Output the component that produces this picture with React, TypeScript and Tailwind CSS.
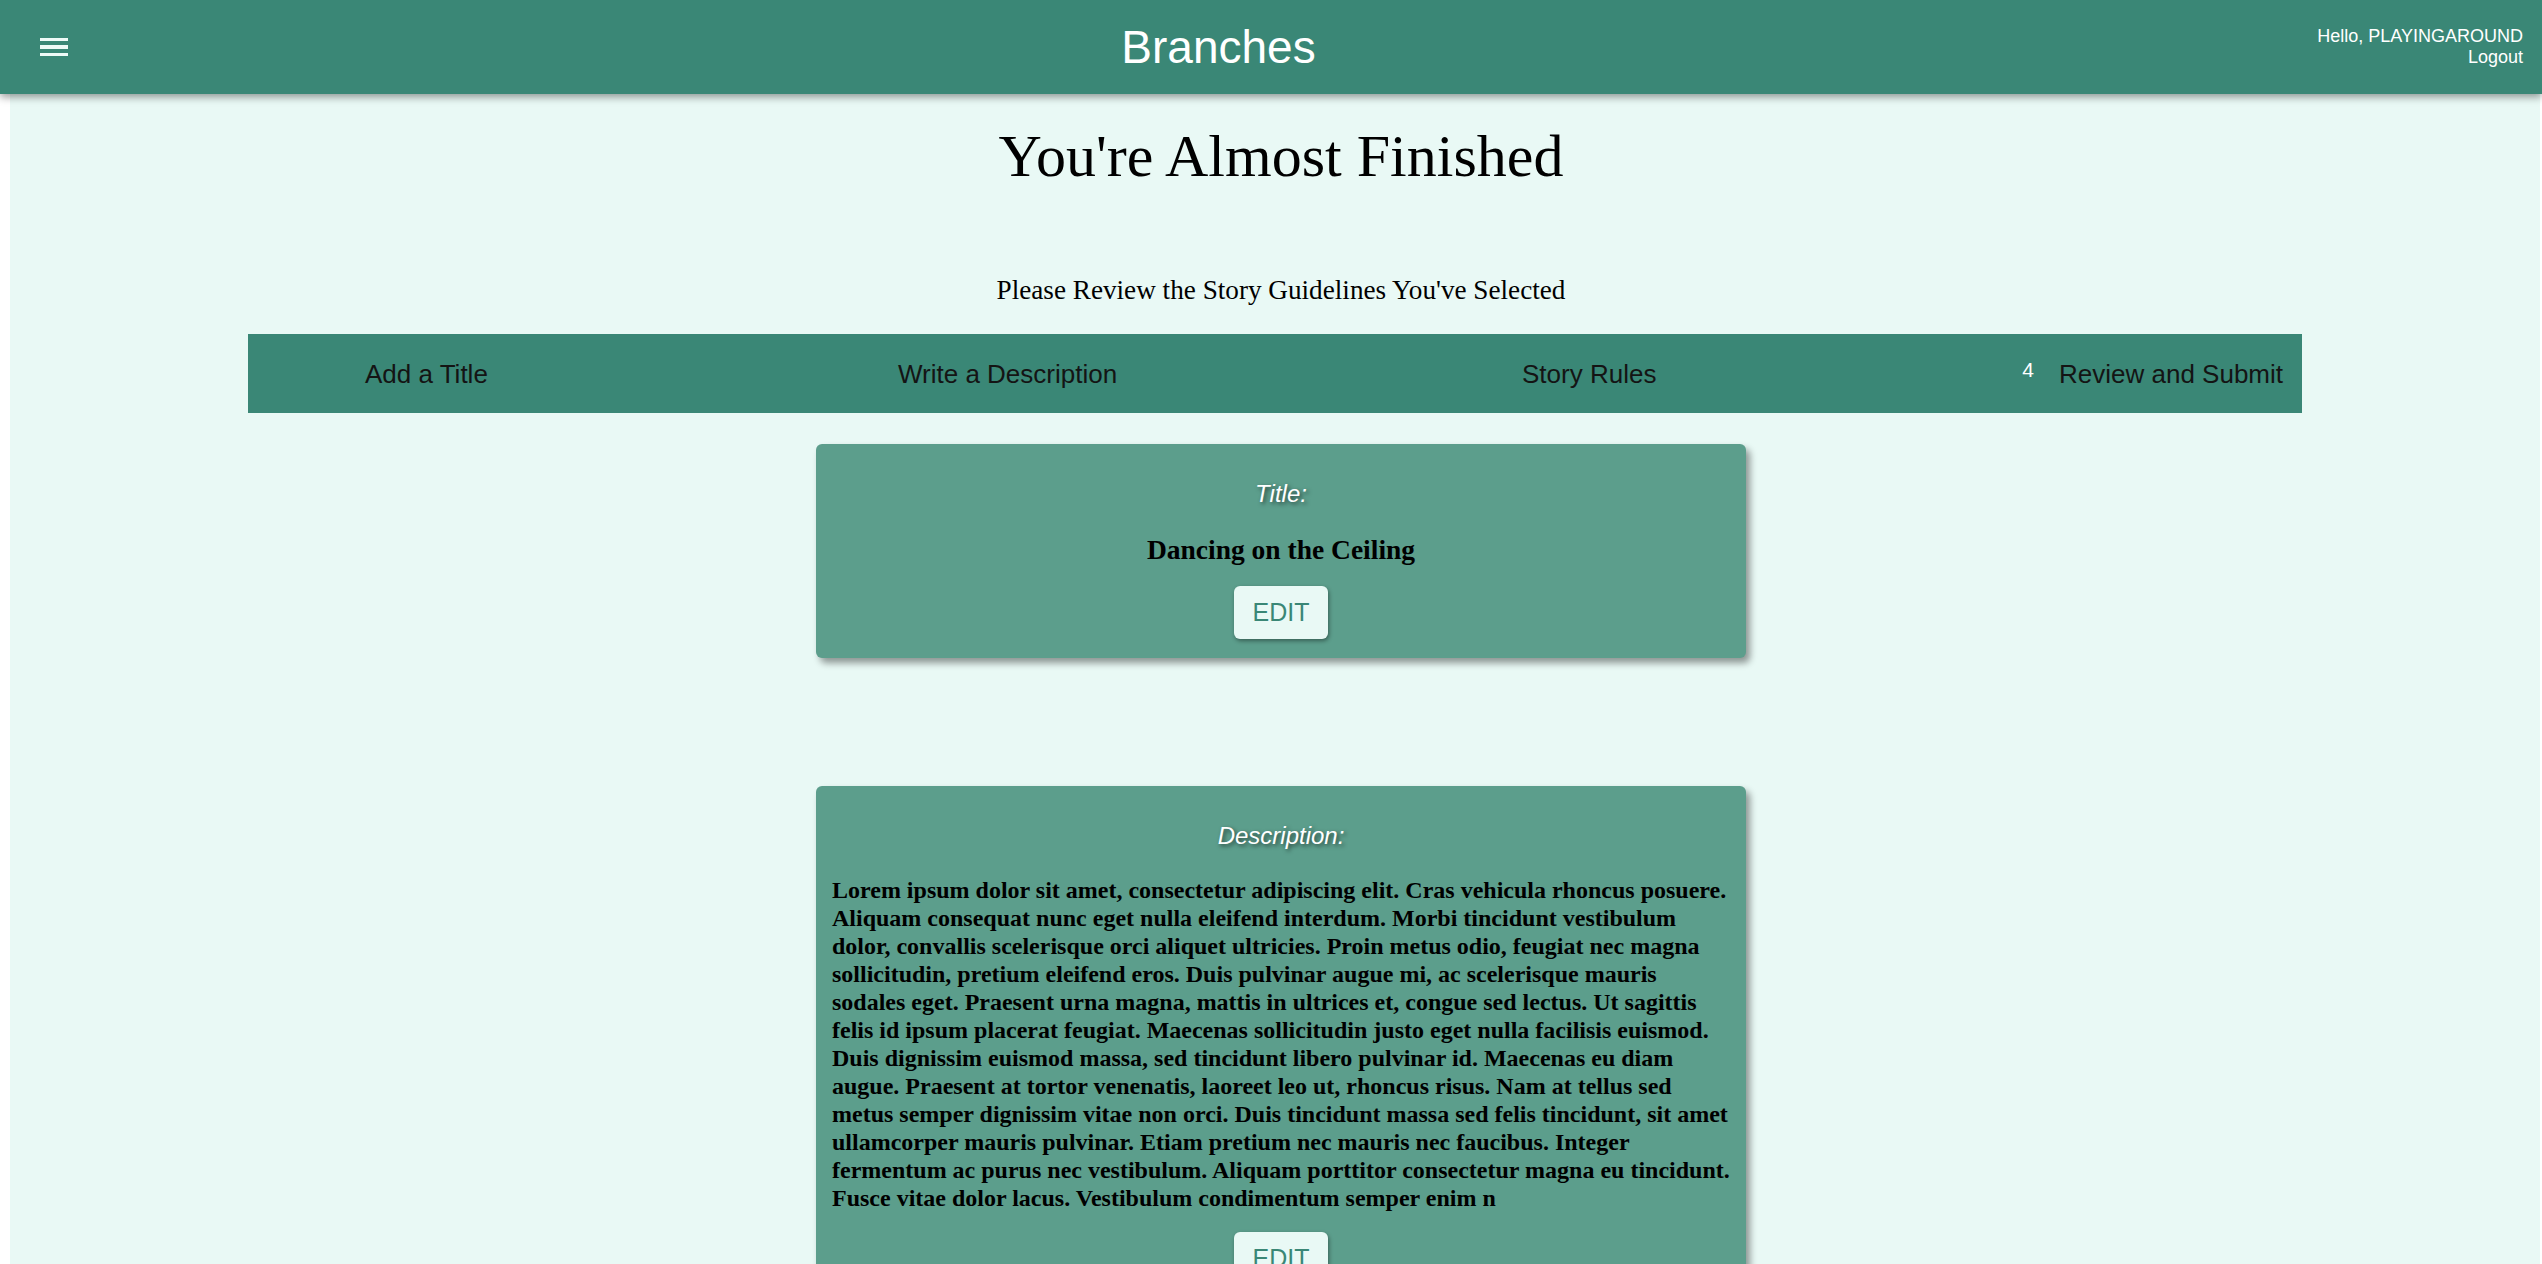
const lorem =
  "Lorem ipsum dolor sit amet, consectetur adipiscing elit. Cras vehicula rhoncus posuere. Aliquam consequat nunc eget nulla eleifend interdum. Morbi tincidunt vestibulum dolor, convallis scelerisque orci aliquet ultricies. Proin metus odio, feugiat nec magna sollicitudin, pretium eleifend eros. Duis pulvinar augue mi, ac scelerisque mauris sodales eget. Praesent urna magna, mattis in ultrices et, congue sed lectus. Ut sagittis felis id ipsum placerat feugiat. Maecenas sollicitudin justo eget nulla facilisis euismod. Duis dignissim euismod massa, sed tincidunt libero pulvinar id. Maecenas eu diam augue. Praesent at tortor venenatis, laoreet leo ut, rhoncus risus. Nam at tellus sed metus semper dignissim vitae non orci. Duis tincidunt massa sed felis tincidunt, sit amet ullamcorper mauris pulvinar. Etiam pretium nec mauris nec faucibus. Integer fermentum ac purus nec vestibulum. Aliquam porttitor consectetur magna eu tincidunt. Fusce vitae dolor lacus. Vestibulum condimentum semper enim n";

const sans = "font-['Liberation_Sans',Arial,sans-serif]";
const serif = "font-['Liberation_Serif','Times_New_Roman',serif]";

const Header = () => (
  <header
    className={`relative z-10 flex h-[94px] items-center bg-[#3a8776] text-white shadow-[0_3px_8px_rgba(0,0,0,0.4)] ${sans}`}
  >
    <div className="flex w-[129px] shrink-0 pl-[40px]">
      <button className="flex h-[19px] w-[28px] flex-col justify-between">
        <span className="block h-[3.3px] w-full bg-[#eefaf7]" />
        <span className="block h-[3.3px] w-full bg-[#eefaf7]" />
        <span className="block h-[3.3px] w-full bg-[#eefaf7]" />
      </button>
    </div>
    <h1 className="flex-1 text-center text-[46px] leading-none">Branches</h1>
    <div className="w-[234px] shrink-0 pr-[19px] text-right text-[18px] leading-[21px]">
      <p>Hello, PLAYINGAROUND</p>
      <p>Logout</p>
    </div>
  </header>
);

const Stepper = () => (
  <div className={`mx-auto flex h-[79px] w-[2054px] items-center bg-[#3a8776] pl-[85px] ${sans}`}>
    <div className="flex w-[533px] items-center gap-2">
      <span className="w-6" />
      <span className="text-[26px] leading-none text-[#141414]">Add a Title</span>
    </div>
    <div className="flex w-[624px] items-center gap-2">
      <span className="w-6" />
      <span className="text-[26px] leading-none text-[#141414]">Write a Description</span>
    </div>
    <div className="flex w-[531px] items-center gap-2">
      <span className="w-6" />
      <span className="text-[26px] leading-none text-[#141414]">Story Rules</span>
    </div>
    <div className="flex items-center gap-[24px]">
      <span className="mb-[8px] w-[14px] text-center text-[21px] leading-none text-white">4</span>
      <span className="text-[26px] leading-none text-[#141414]">Review and Submit</span>
    </div>
  </div>
);

type ReviewCardProps = { label: string; children: React.ReactNode };

const ReviewCard = ({ label, children }: ReviewCardProps) => (
  <div className="flex justify-center pl-[12px]">
    <div className="flex w-[930px] flex-col items-center rounded-md bg-[#5c9e8c] px-4 pb-[19px] pt-[32px] shadow-[4px_5px_7px_rgba(0,0,0,0.4)]">
      <h3
        className={`text-[24px] italic text-white [text-shadow:2px_2px_4px_rgba(0,0,0,0.6)] ${sans}`}
      >
        {label}
      </h3>
      <div className={`mt-[22px] w-full text-black ${serif}`}>{children}</div>
      <button
        className={`mt-[20px] h-[53px] rounded-md bg-[#e9f9f5] px-[19px] text-[25px] text-[#3a8776] shadow-[1px_2px_4px_rgba(0,0,0,0.4)] ${sans}`}
      >
        EDIT
      </button>
    </div>
  </div>
);

export default function App() {
  return (
    <div className="min-h-screen bg-white">
      <Header />
      <main className={`ml-[10px] mr-[2px] min-h-[1170px] bg-[#e9f9f5] pb-10 ${serif}`}>
        <div className="pl-[12px] text-center text-black">
          <h2 className="pt-[28px] text-[60px] leading-[1.15]">You're Almost Finished</h2>
          <p className="mt-[84px] text-[27.2px] leading-[1.15]">Please Review the Story Guidelines You've Selected</p>
        </div>
        <div className="mt-[28px]">
          <Stepper />
        </div>
        <div className="mt-[31px] flex flex-col gap-[128px]">
          <ReviewCard label="Title:">
            <p className="text-center text-[27.5px] font-bold leading-[1.15]">Dancing on the Ceiling</p>
          </ReviewCard>
          <ReviewCard label="Description:">
            <p className="text-[24px] font-bold leading-[28px]">{lorem}</p>
          </ReviewCard>
        </div>
      </main>
    </div>
  );
}
